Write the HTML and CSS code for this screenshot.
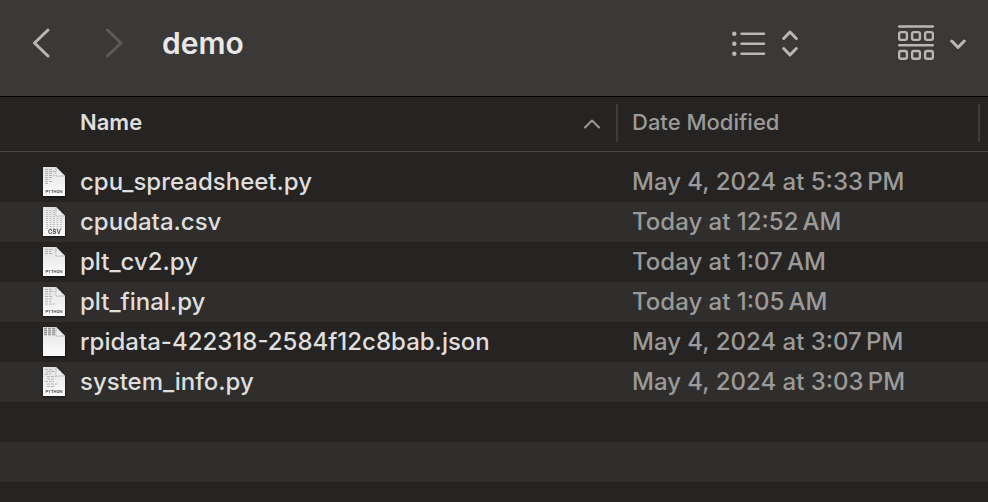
FILE: index.html
```html
<!DOCTYPE html>
<html lang="en">
<head>
<meta charset="utf-8">
<meta name="viewport" content="width=device-width, initial-scale=1">
<title>demo</title>
<link rel="stylesheet" href="styles.css">
</head>
<body>
<svg class="defs" aria-hidden="true">
  <defs>
    <linearGradient id="paper" x1="0" y1="0" x2="0" y2="1">
      <stop offset="0" stop-color="#e2e2e2"/>
      <stop offset="1" stop-color="#fcfcfc"/>
    </linearGradient>
    <linearGradient id="fold" x1="0" y1="1" x2="1" y2="0">
      <stop offset="0" stop-color="#ffffff"/>
      <stop offset="1" stop-color="#d0d0d0"/>
    </linearGradient>
    <symbol id="sheet" viewBox="0 0 24 30">
      <path d="M1 0h13l9 9v20H1z" fill="url(#paper)"/>
      <path d="M14 0v9h9z" fill="url(#fold)"/>
      <path d="M14 0v9h9" fill="none" stroke="#aaa" stroke-width=".7"/>
    </symbol>
  </defs>
</svg>
<header class="toolbar">
  <nav class="history">
    <button class="tool" type="button" aria-label="Back">
      <svg width="18" height="30" viewBox="0 0 18 30"><path d="M16 2 2.500 15 16 28"/></svg>
    </button>
    <button class="tool" type="button" aria-label="Forward" disabled>
      <svg width="18" height="30" viewBox="0 0 18 30"><path d="M1.500 2 15 15 1.500 28"/></svg>
    </button>
  </nav>
  <h1 class="title">demo</h1>
  <button class="tool view" type="button" aria-label="View as list">
    <svg width="34" height="26" viewBox="0 0 34 26">
      <path d="M9.500 3.700h22.500M9.500 13.700h22.500M9.500 23.700h22.500"/>
      <g class="solid"><circle cx="2.300" cy="3.700" r="2.200"/><circle cx="2.300" cy="13.700" r="2.200"/><circle cx="2.300" cy="23.700" r="2.200"/></g>
    </svg>
    <svg width="16" height="28" viewBox="0 0 16 28"><path class="bold" d="M1.700 9.500 8 3 14.300 9.500M1.700 19.500 8 26 14.300 19.500"/></svg>
  </button>
  <button class="tool group" type="button" aria-label="Group items">
    <svg width="36" height="36" viewBox="0 0 36 36">
      <path d="M1 1.500h34M1 20.300h34"/>
      <rect x="1.100" y="7.100" width="7.800" height="7.800" rx="1.800"/><rect x="14.100" y="7.100" width="7.800" height="7.800" rx="1.800"/><rect x="27.100" y="7.100" width="7.800" height="7.800" rx="1.800"/>
      <rect x="1.100" y="26" width="7.800" height="7.800" rx="1.800"/><rect x="14.100" y="26" width="7.800" height="7.800" rx="1.800"/><rect x="27.100" y="26" width="7.800" height="7.800" rx="1.800"/>
    </svg>
    <svg width="16" height="12" viewBox="0 0 16 12"><path class="bold" d="M1.700 4 8 10.400 14.300 4"/></svg>
  </button>
</header>
<main class="browser">
  <table class="files">
    <colgroup><col><col class="col-date"><col class="col-rest"></colgroup>
    <thead>
      <tr>
        <th scope="col" aria-sort="ascending"><button class="sort active" type="button">Name<svg width="16" height="10" viewBox="0 0 16 10"><path d="M1 8.500 8 1.500 15 8.500"/></svg></button></th>
        <th scope="col"><button class="sort" type="button">Date Modified</button></th>
        <th></th>
      </tr>
    </thead>
    <tbody>
      <tr>
        <td><div class="file"><svg class="icon" viewBox="0 0 24 30"><use href="#sheet"/><path class="code" d="M3 2.500h8M3 4.500h10M3 6.500h8M3 8.500h9M3 10.500h8M3 12.500h5M3 14.500h7M3 16.500h4"/><text x="12" y="26">PYTHON</text></svg>cpu_spreadsheet.py</div></td>
        <td>May 4, 2024 at 5:33&#8239;PM</td><td></td>
      </tr>
      <tr>
        <td><div class="file"><svg class="icon" viewBox="0 0 24 30"><use href="#sheet"/><path class="cells" d="M5 3v19M8.500 3v19M12 3v19M15.500 11v11M19 11v11"/><text class="csv" x="12.500" y="27">CSV</text></svg>cpudata.csv</div></td>
        <td>Today at 12:52&#8239;AM</td><td></td>
      </tr>
      <tr>
        <td><div class="file"><svg class="icon" viewBox="0 0 24 30"><use href="#sheet"/><path class="code" d="M3 2.500h8M3 4.500h6M3 6.500h8"/><text x="12" y="26">PYTHON</text></svg>plt_cv2.py</div></td>
        <td>Today at 1:07&#8239;AM</td><td></td>
      </tr>
      <tr>
        <td><div class="file"><svg class="icon" viewBox="0 0 24 30"><use href="#sheet"/><path class="code" d="M3 2.500h7M3 4.500h9M3 7h6M3 9.500h8M3 12h7M3 14.500h6M3 17h10"/><text x="12" y="26">PYTHON</text></svg>plt_final.py</div></td>
        <td>Today at 1:05&#8239;AM</td><td></td>
      </tr>
      <tr>
        <td><div class="file"><svg class="icon" viewBox="0 0 24 30"><use href="#sheet"/><path class="dense" d="M2 1.500h11M2 3.500h11M2 5.500h11M2 7.500h11"/></svg>rpidata-422318-2584f12c8bab.json</div></td>
        <td>May 4, 2024 at 3:07&#8239;PM</td><td></td>
      </tr>
      <tr>
        <td><div class="file"><svg class="icon" viewBox="0 0 24 30"><use href="#sheet"/><path class="code" d="M3 2.500h8M5 4.500h7M3 7h6M5 9.500h9M5 12h7M3 14.500h9M5 17h10M5 19.500h7"/><text x="12" y="26">PYTHON</text></svg>system_info.py</div></td>
        <td>May 4, 2024 at 3:03&#8239;PM</td><td></td>
      </tr>
    </tbody>
  </table>
  <div class="stripes"></div>
</main>
</body>
</html>
```
FILE: styles.css
```css
* {
  box-sizing: border-box;
}

body {
  margin: 0;
  height: 100vh;
  display: flex;
  flex-direction: column;
  overflow: hidden;
  background: #252422;
  color: #dfdedd;
  font: 450 24px/40px Inter, "Liberation Sans", sans-serif;
}

button {
  padding: 0;
  border: 0;
  background: none;
  color: inherit;
  font: inherit;
}

.defs {
  position: absolute;
  width: 0;
  height: 0;
}

.toolbar {
  flex: none;
  display: flex;
  align-items: center;
  height: 97px;
  padding: 0 22px 10px 32px;
  border-bottom: 1px solid #000;
  background: #3a3937;
}

.history {
  display: flex;
  gap: 56px;
}

.tool {
  display: flex;
  align-items: center;
  color: #b8b7b6;
}

.tool:disabled {
  color: #5d5c5a;
}

.tool svg,
.sort svg {
  display: block;
  fill: none;
  stroke: currentColor;
  stroke-width: 2.4;
  stroke-linecap: round;
  stroke-linejoin: round;
}

.history svg {
  stroke-width: 3;
}

.tool .bold {
  stroke-width: 3;
}

.tool .solid {
  fill: currentColor;
  stroke: none;
}

.title {
  flex: 1;
  margin: 0 0 0 38px;
  color: #e9e8e7;
  font-size: 30px;
  font-weight: 600;
}

.view {
  gap: 16px;
}

.group {
  gap: 16px;
  margin-left: 100px;
}

.browser {
  flex: 1;
  display: flex;
  flex-direction: column;
  min-height: 0;
}

.files {
  flex: none;
  width: 100%;
  table-layout: fixed;
  border-collapse: separate;
  border-spacing: 0;
}

.col-date {
  width: 362px;
}

.col-rest {
  width: 8px;
}

th {
  height: 55px;
  padding: 6px 0 8px;
  border-bottom: 1px solid #484746;
  text-align: left;
  font-weight: 450;
}

.sort {
  display: flex;
  align-items: center;
  justify-content: space-between;
  width: 100%;
  height: 38px;
  padding: 0 16px 2px 14px;
  border-right: 2px solid #3d3c3b;
  color: #9b9a99;
  font-size: 22px;
}

.sort.active {
  padding-left: 80px;
  color: #dfdedd;
  font-weight: 600;
}

.sort svg {
  margin-top: 4px;
  color: #9b9a99;
  stroke-width: 2;
}

tbody::before {
  content: "";
  display: block;
  height: 10px;
}

td {
  height: 40px;
  padding: 0 0 0 14px;
  color: #9b9a99;
  white-space: nowrap;
}

td:first-child {
  padding-left: 42px;
  color: #dfdedd;
}

td:last-child {
  padding: 0;
}

tbody tr:nth-child(even) {
  background: #2f2e2c;
}

.file {
  display: flex;
  align-items: center;
  gap: 14px;
}

.icon {
  flex: none;
  width: 24px;
  height: 30px;
  filter: drop-shadow(0 1px 1px #0009);
}

.icon text {
  fill: #444;
  font-size: 4px;
  font-weight: 600;
  text-anchor: middle;
}

.icon .csv {
  font-size: 6px;
  font-weight: 700;
}

.code,
.cells,
.dense {
  fill: none;
  stroke: #b2b2b2;
  stroke-width: 1;
  stroke-dasharray: 3 1;
}

.cells {
  stroke: #c0c0c0;
  stroke-width: 2;
  stroke-dasharray: 1 1;
}

.dense {
  stroke: #999;
  stroke-width: 1.5;
}

.stripes {
  flex: 1;
  background: repeating-linear-gradient(#252422 0 40px, #2f2e2c 40px 80px);
}
```
